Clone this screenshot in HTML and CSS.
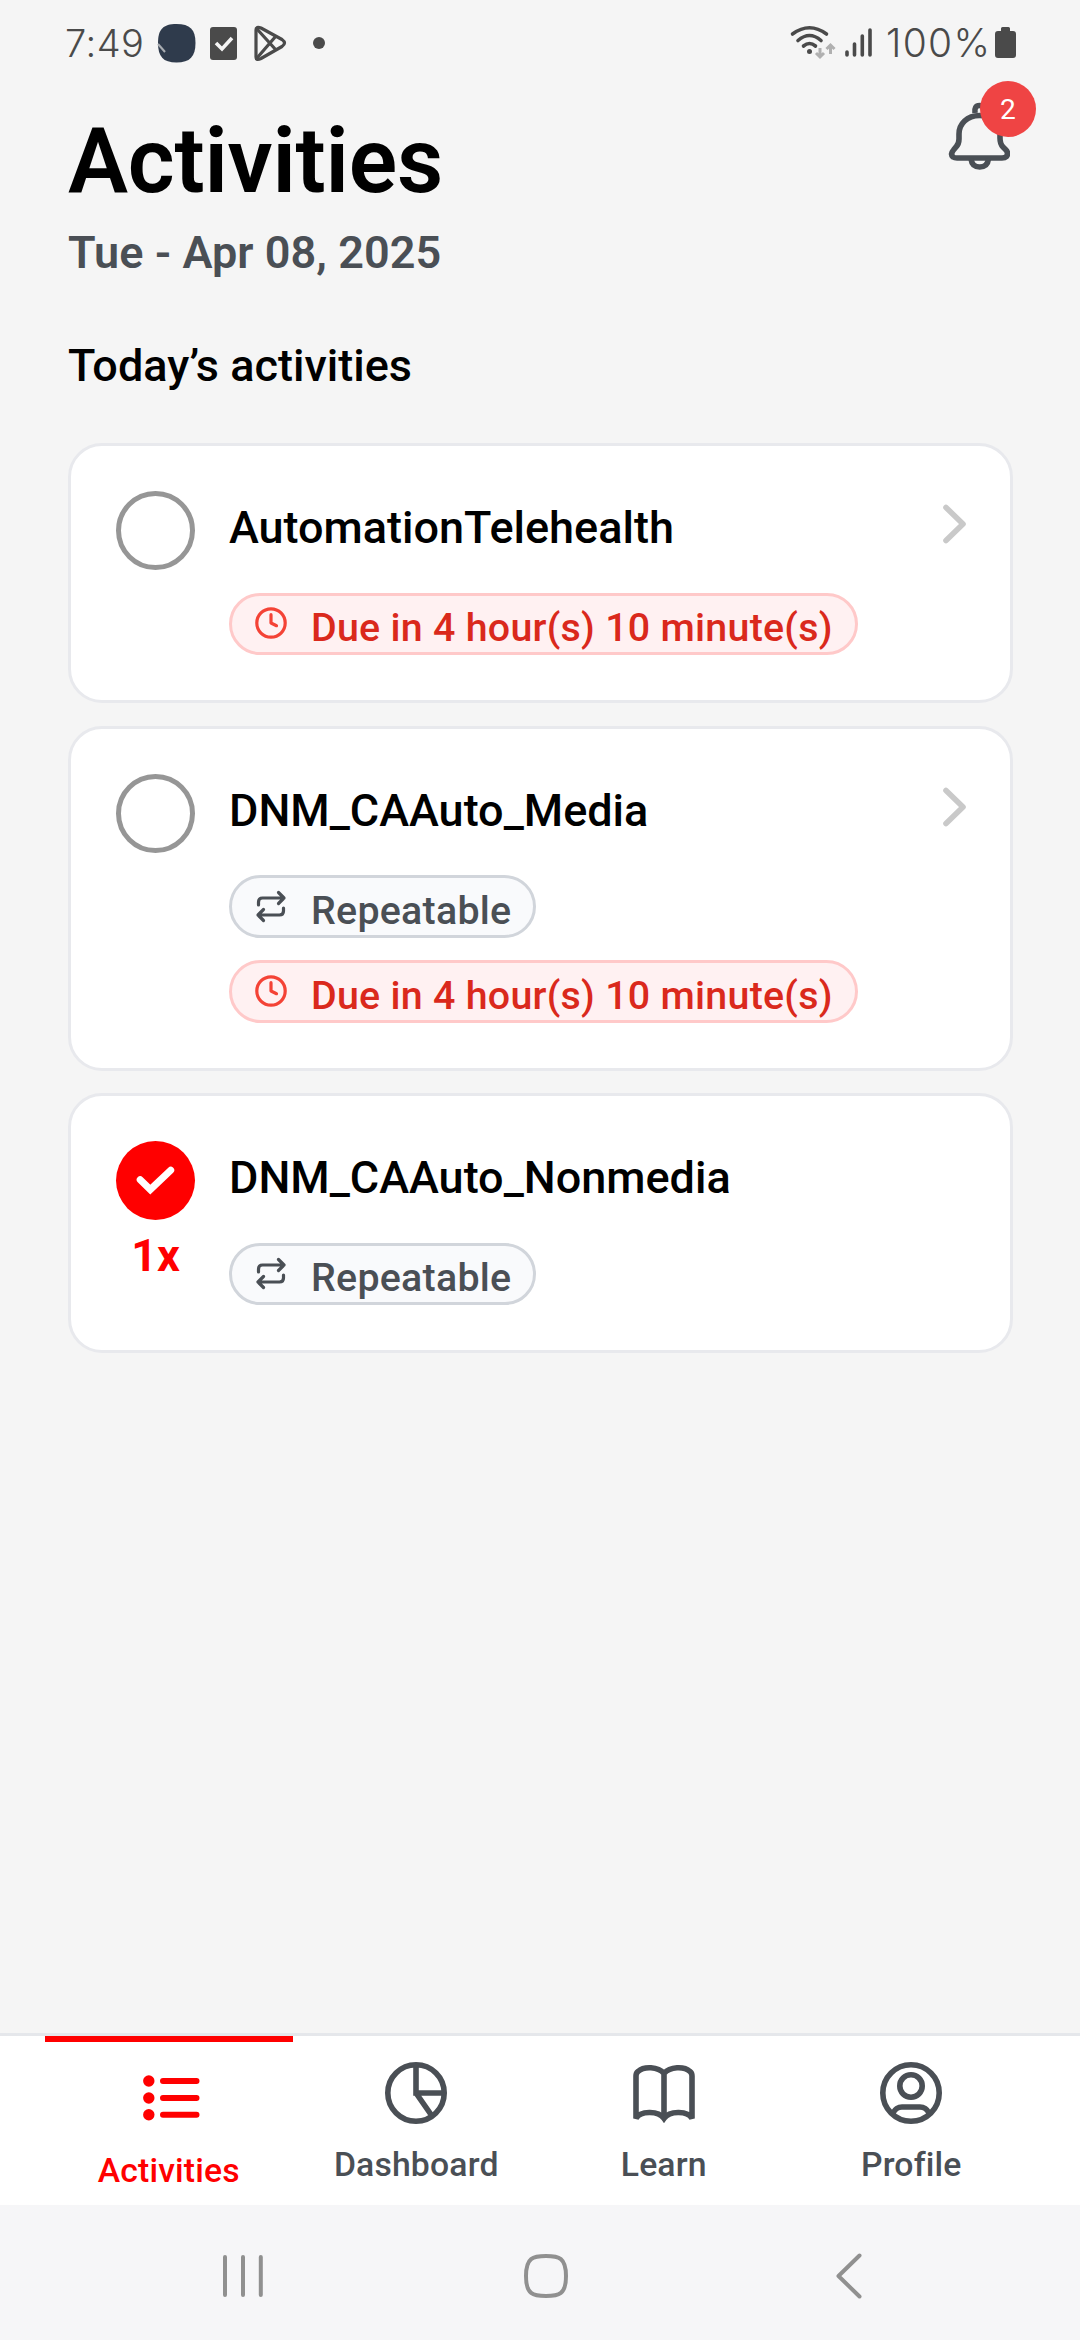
FILE: index.html
```html
<!DOCTYPE html>
<html lang="en">
<head>
<meta charset="utf-8">
<title>Activities</title>
<link rel="stylesheet" href="styles.css">
</head>
<body>
<div class="status">
  <span class="time">7:49</span>
  <svg class="status-left" width="180" height="56" viewBox="150 15 180 56">
    <path d="M176.500 24C190 24 195.500 29.500 195.500 43S190 62.500 176.500 62.500 158 56.500 158 43 163 24 176.500 24Z" fill="#2f3b4c"/>
    <path d="M158 44l7 8" stroke="#a9adb2" stroke-width="2"/>
    <rect x="210" y="27" width="27" height="33" rx="3" fill="#4a4a4a"/>
    <path d="M216 43l6 6 10-11" fill="none" stroke="#f4f4f4" stroke-width="3.600"/>
    <g fill="none" stroke="#4a4a4a" stroke-width="3.200" stroke-linejoin="round">
      <path d="M256 30Q256 26 261 28L282 39.500Q287 43 282 46.500L261 58.500Q256 61 256 57Z"/>
      <path d="M257 29L276 50M257 58L276 36"/>
    </g>
    <circle cx="319" cy="43" r="6" fill="#4a4a4a"/>
  </svg>
  <svg class="status-right" width="92" height="56" viewBox="786 15 92 56">
    <g fill="none" stroke="#4a4a4a" stroke-width="3.600" stroke-linecap="round">
      <path d="M792.500 34Q809.500 21.500 826.500 34M798 40.500Q809.500 30.500 821 40.500M803.500 46Q809.500 41 815.500 46"/>
      <path d="M847 52v3M854.500 44v11M862.300 36v19M870 30v25"/>
    </g>
    <circle cx="809.500" cy="51.500" r="2.500" fill="#4a4a4a"/>
    <path d="M820 48v8M816 53l4 4 4-4M830.500 54v-8M826.500 49l4-4 4 4" fill="none" stroke="#b0b0b0" stroke-width="3"/>
  </svg>
  <span class="percent">100%</span>
  <svg class="battery" width="21" height="32" viewBox="0 0 21 32"><path d="M6 4V1.500Q6 0 7.500 0h6Q15 0 15 1.500V4h3q3 0 3 3v21q0 3-3 3H3q-3 0-3-3V7q0-3 3-3z" fill="#4a4a4a"/></svg>
</div>

<header class="header">
  <div>
    <h1 class="heading">Activities</h1>
    <p class="date">Tue - Apr 08, 2025</p>
  </div>
  <div class="bell">
    <svg width="62" height="70" viewBox="948 102 62 70" fill="none" stroke="#4a4f55" stroke-width="5.600">
      <path d="M979.500 115.500C967 115.500 959 124 959 134V139Q959 144 956 147L953.500 150Q950 154 953 157Q954.500 158 957 158H1002Q1005 158 1006.500 156.500Q1009 153 1005.500 149.500L1003 147Q1000 144 1000 138V134C1000 124 992 115.500 979.500 115.500Z"/>
      <path d="M975 113Q974 105.500 979.500 105.500Q985 105.500 984 113M971 159Q972 167 979.700 167Q987.500 167 988.500 159"/>
    </svg>
    <span class="badge">2</span>
  </div>
</header>

<main class="content">
  <h2 class="section-title">Today’s activities</h2>
  <div class="cards">
    <article class="card">
      <div class="mark"><span class="ring"></span></div>
      <div class="body">
        <h3 class="title">AutomationTelehealth</h3>
        <div class="chip due"><svg class="chip-icon" width="34" height="34" viewBox="0 0 34 34"><g fill="none" stroke="#f44336" stroke-width="3.200" stroke-linecap="round" stroke-linejoin="round"><circle cx="17" cy="17" r="14.200"/><path d="M17 8.700V17l5.500 2.700"/></g></svg>Due in 4 hour(s) 10 minute(s)</div>
      </div>
      <svg class="chevron" width="24" height="40" viewBox="0 0 24 40"><path d="M3 3.500L20 20 3 36.500"/></svg>
    </article>
    <article class="card">
      <div class="mark"><span class="ring"></span></div>
      <div class="body">
        <h3 class="title">DNM_CAAuto_Media</h3>
        <div class="chip repeat"><svg class="chip-icon" width="34" height="34" viewBox="0 0 34 34"><path class="loop" d="M4.500 16V13Q4.500 9 8.500 9H30M24.500 3.500L30 9l-5.500 5.500M29.500 19v3Q29.500 26 25.500 26H4M9.500 20.500L4 26l5.500 5.500"/></svg>Repeatable</div>
        <div class="chip due"><svg class="chip-icon" width="34" height="34" viewBox="0 0 34 34"><g fill="none" stroke="#f44336" stroke-width="3.200" stroke-linecap="round" stroke-linejoin="round"><circle cx="17" cy="17" r="14.200"/><path d="M17 8.700V17l5.500 2.700"/></g></svg>Due in 4 hour(s) 10 minute(s)</div>
      </div>
      <svg class="chevron" width="24" height="40" viewBox="0 0 24 40"><path d="M3 3.500L20 20 3 36.500"/></svg>
    </article>
    <article class="card">
      <div class="mark">
        <span class="done"><svg width="79" height="79" viewBox="0 0 79 79"><path d="M24.200 38.800L34.300 48.600 54.700 29.200" fill="none" stroke="#fff" stroke-width="7" stroke-linecap="round"/></svg></span>
        <span class="count">1x</span>
      </div>
      <div class="body">
        <h3 class="title">DNM_CAAuto_Nonmedia</h3>
        <div class="chip repeat"><svg class="chip-icon" width="34" height="34" viewBox="0 0 34 34"><path class="loop" d="M4.500 16V13Q4.500 9 8.500 9H30M24.500 3.500L30 9l-5.500 5.500M29.500 19v3Q29.500 26 25.500 26H4M9.500 20.500L4 26l5.500 5.500"/></svg>Repeatable</div>
      </div>
    </article>
  </div>
</main>

<nav class="tabs">
  <a class="tab active"><svg width="68" height="68" viewBox="0 0 68 68" stroke="currentColor" stroke-width="6" stroke-linecap="round"><g fill="currentColor" stroke="none"><circle cx="13.800" cy="16" r="5.700"/><circle cx="13.800" cy="33" r="5.700"/><circle cx="13.800" cy="49.800" r="5.700"/></g><path d="M28 16H61.500M28 33H61.500M28 49.800H61.500"/></svg><span>Activities</span></a>
  <a class="tab"><svg width="68" height="68" viewBox="0 0 68 68" fill="none" stroke="currentColor" stroke-width="5.600"><circle cx="34" cy="34" r="28.200"/><path d="M34 6V34H62M34 34L50 57"/></svg><span>Dashboard</span></a>
  <a class="tab"><svg width="68" height="68" viewBox="0 0 68 68" fill="none" stroke="currentColor" stroke-width="5.600"><path d="M34 60V14.500M34 14.500C28 7.500 14 7 8 12.500Q6 14 6 17V59.500C10 52 28 51 34 59.500C40 51 58 52 62 59.500V17Q62 14 60 12.500C54 7 40 7.500 34 14.500"/></svg><span>Learn</span></a>
  <a class="tab"><svg width="68" height="68" viewBox="0 0 68 68" fill="none" stroke="currentColor" stroke-width="5.600"><circle cx="34" cy="34" r="28.200"/><circle cx="34" cy="27" r="11.200"/><path d="M16 54Q19 48 25 48H43Q49 48 52 54"/></svg><span>Profile</span></a>
</nav>
<div class="sysnav">
  <svg width="56" height="56" viewBox="0 0 56 56"><path d="M10 9v38M28 9v38M45.800 9v38"/></svg>
  <svg width="56" height="56" viewBox="0 0 56 56"><path d="M28 8C41 8 48 9.500 48 28S41 48 28 48 8 46.500 8 28 15 8 28 8Z"/></svg>
  <svg width="56" height="56" viewBox="0 0 56 56"><path d="M38.500 7.500L17.500 28 38.500 48.500"/></svg>
</div>
</body>
</html>
```
FILE: styles.css
```css
* { box-sizing: border-box; margin: 0; padding: 0; }
body {
  width: 1080px; height: 2340px; background: #f5f5f5; color: #000;
  font-family: Roboto, "Liberation Sans", sans-serif;
  display: flex; flex-direction: column; overflow: hidden;
}
svg { display: block; flex: none; }
.status {
  height: 86px; padding: 15px 64px 15px 65px; display: flex; color: #4a4a4a;
  font: 350 38px/56px Inter, sans-serif;
}
.time { width: 85px; white-space: nowrap; letter-spacing: 0.500px; }
.status-right { margin-left: auto; }
.percent { width: 105px; padding-left: 8px; font-size: 39px; white-space: nowrap; letter-spacing: 1.300px; }
.battery { margin: 12px 0 0 12px; }
.header { height: 214px; padding: 0 44px 0 68px; display: flex; justify-content: space-between; }
.heading { margin-top: 23px; font-size: 90px; line-height: 106px; font-weight: 600; letter-spacing: -0.250px; }
.date { margin-top: 11px; font-size: 45px; line-height: 53px; font-weight: 600; color: #4a4f55; letter-spacing: 0.050px; }
.bell { position: relative; width: 88px; height: 90px; padding-top: 16px; }
.badge {
  position: absolute; right: 0; top: -5px; width: 56px; height: 56px; border-radius: 50%;
  background: #ef4444; color: #fff; font-size: 28.100px; line-height: 58px; text-align: center;
}
.content { flex: 1; padding: 39px 67px 0 68px; }
.section-title { font-size: 45px; line-height: 53px; font-weight: 500; }
.cards { margin-top: 51px; display: flex; flex-direction: column; gap: 22.500px; }
.card {
  display: flex; align-items: flex-start; background: #fff;
  border: 3px solid #e8e9ed; border-radius: 34px; padding: 45px;
}
.mark { width: 79px; margin-right: 34px; display: flex; flex-direction: column; align-items: center; }
.ring { width: 79px; height: 79px; border: 5.600px solid #969696; border-radius: 50%; }
.done { width: 79px; height: 79px; border-radius: 50%; background: #f00; }
.count { height: 53px; margin: 9px 0 -20px; font-size: 45px; line-height: 53px; font-weight: 700; color: #f00; }
.body { flex: 1; display: flex; flex-direction: column; align-items: flex-start; padding-top: 10px; }
.title { font-size: 45px; line-height: 53px; font-weight: 500; margin-bottom: 38.700px; }
.chip {
  height: 62.400px; display: flex; align-items: center; border: 3px solid; border-radius: 32px;
  padding: 9px 22px 0 22px; font-size: 39.375px; line-height: 46px; font-weight: 500; letter-spacing: 0.260px; white-space: nowrap;
}
.chip-icon { margin: -10px 23px 0 0; }
.chip + .chip { margin-top: 22.500px; }
.due { background: #fff1f2; border-color: #ffc9c9; color: #da291c; }
.repeat { background: #f9fafc; border-color: #d1d5db; color: #4a4f55; }
.loop { fill: none; stroke: #4a4f55; stroke-width: 3.200px; stroke-linecap: round; stroke-linejoin: round; }
.chevron { margin: 13px -2px 0 0; }
.chevron path { fill: none; stroke: #c9c9c9; stroke-width: 5.600px; stroke-linecap: round; stroke-linejoin: round; }
.tabs {
  height: 172px; background: #fff; border-top: 3px solid #e5e7eb; padding: 0 45px;
  display: grid; grid-template-columns: repeat(4, 1fr);
}
.tab {
  display: flex; flex-direction: column; align-items: center; padding-top: 23px; gap: 18px;
  font-size: 33.750px; line-height: 40px; font-weight: 500; letter-spacing: 0.150px; color: #4a4f55;
}
.active { border-top: 6px solid #f00; color: #f00; }
.sysnav { height: 135px; background: #f6f6f8; padding: 43px 203px 0 215px; display: flex; justify-content: space-between; }
.sysnav path { fill: none; stroke: #909090; stroke-width: 4px; stroke-linecap: round; stroke-linejoin: round; }
```
